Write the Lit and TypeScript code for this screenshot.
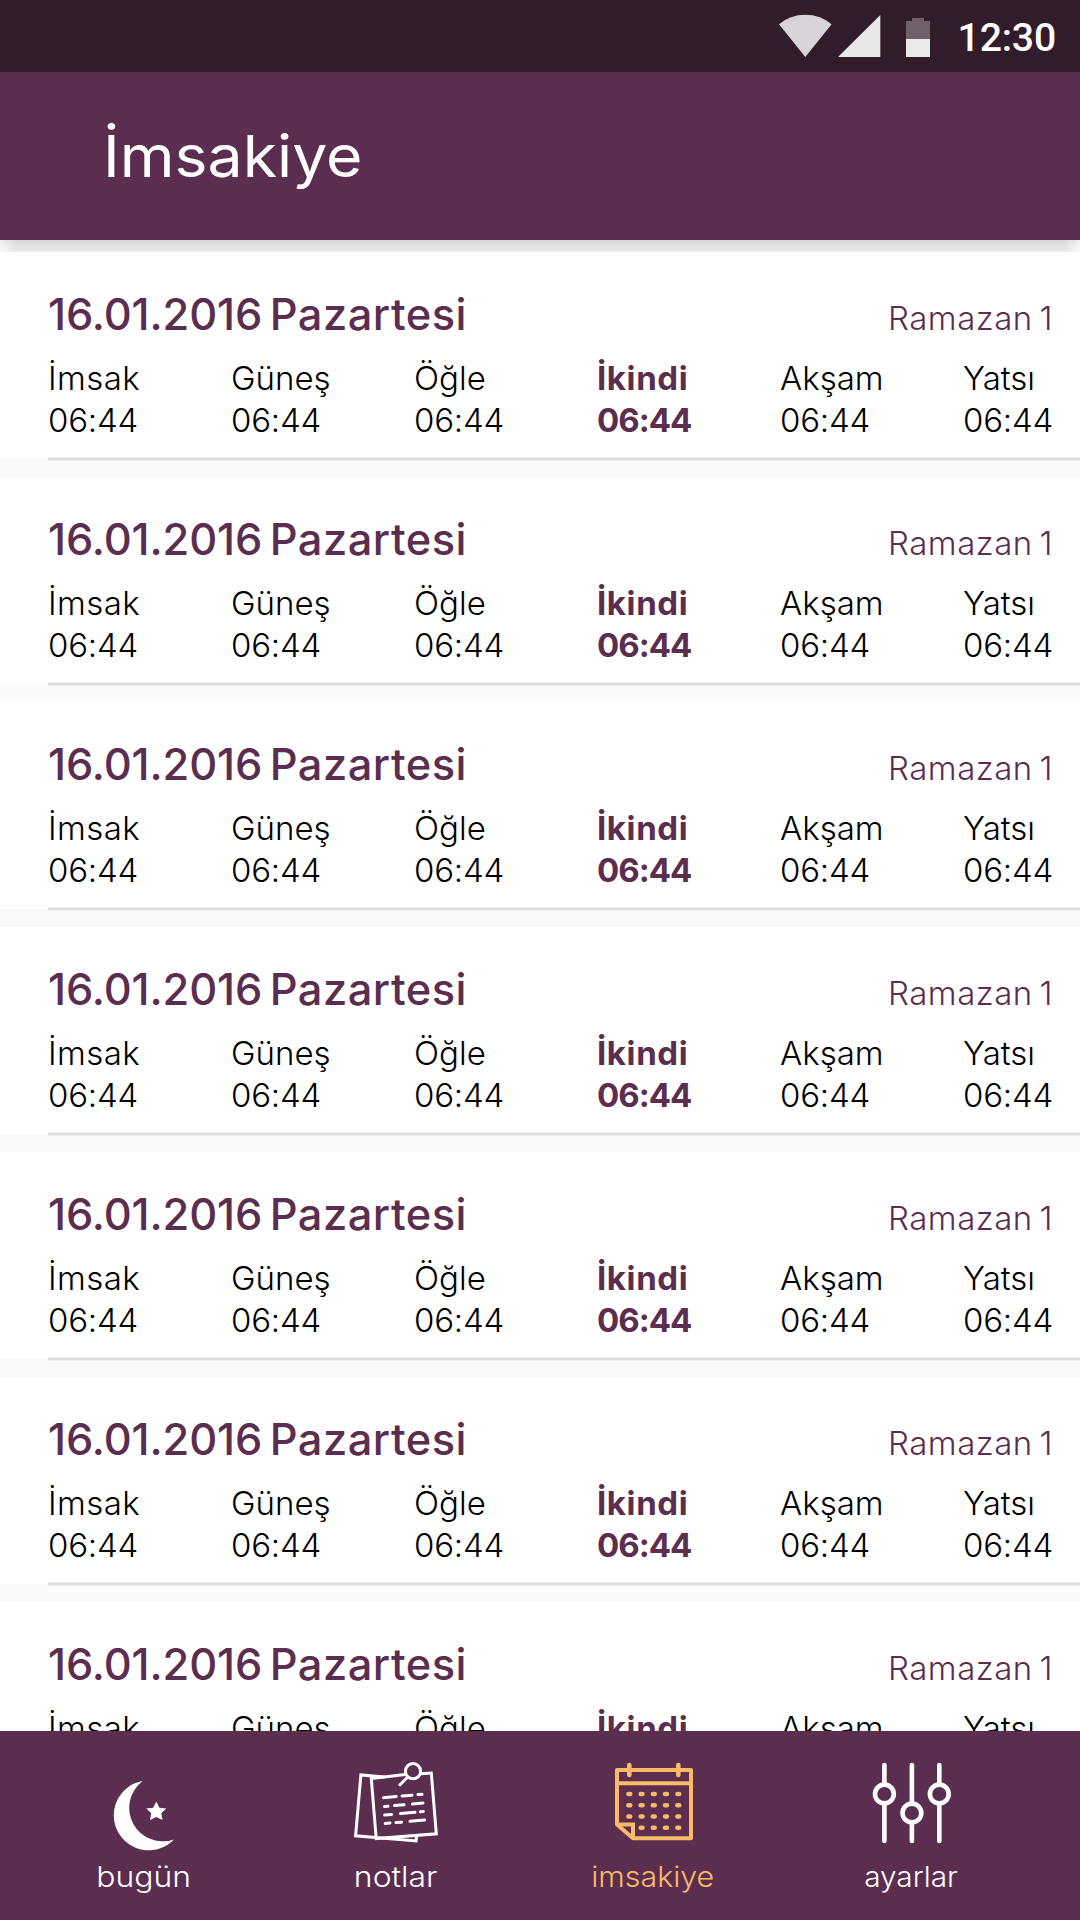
import { LitElement, html, css, svg } from "lit";
import { customElement, property } from "lit/decorators.js";
import { classMap } from "lit/directives/class-map.js";

interface Prayer { name: string; time: string; active?: boolean }
interface Day { date: string; weekday: string; hijri: string; prayers: Prayer[] }

const PRAYERS: Prayer[] = [
  { name: "İmsak", time: "06:44" },
  { name: "Güneş", time: "06:44" },
  { name: "Öğle", time: "06:44" },
  { name: "İkindi", time: "06:44", active: true },
  { name: "Akşam", time: "06:44" },
  { name: "Yatsı", time: "06:44" },
];

const DAYS: Day[] = Array.from({ length: 7 }, () => ({
  date: "16.01.2016",
  weekday: "Pazartesi",
  hijri: "Ramazan 1",
  prayers: PRAYERS,
}));

@customElement("status-bar")
export class StatusBar extends LitElement {
  static styles = css`
    :host { display: flex; justify-content: flex-end; flex: none; height: 72px; background: #311c2b; padding-right: 24px; }
    .icons { width: 152px; height: 72px; margin-right: 28px; }
    .time { font: 500 39.2px/76px Roboto, sans-serif; color: #fff; letter-spacing: -0.2px; }
  `;
  render() {
    return html`
      <svg class="icons" viewBox="778 0 152 72">
        <path d="M805.300 57 L779 24.300 Q790 14.800 805.300 14.800 Q820.600 14.800 831.600 24.300 Z" fill="#dad3d9" />
        <path d="M838 57 L880.300 15 V57 Z" fill="#eae7eb" />
        <path d="M906 39 V21 H912 V18 H924 V21 H930 V39 Z" fill="#6f606b" />
        <path d="M906 39 H930 V57 H906 Z" fill="#ece9ea" />
      </svg>
      <span class="time">12:30</span>
    `;
  }
}

@customElement("day-row")
export class DayRow extends LitElement {
  @property({ attribute: false }) day!: Day;
  static styles = css`
    :host { display: block; box-sizing: border-box; height: 225px; flex: none; background: #fafafa; font-family: Inter, sans-serif; color: #000; }
    .card { box-sizing: border-box; height: 207px; padding: 36px 0 0 48px; background: #fff; }
    .head { display: flex; justify-content: space-between; align-items: baseline; height: 52px; padding-right: 27px; color: #5b2e4f; }
    .date { font-size: 43.400px; line-height: 52px; font-weight: 500; letter-spacing: -0.1px; word-spacing: -4px; white-space: nowrap; }
    .weekday { letter-spacing: 0.5px; }
    .hijri { font-size: 33px; line-height: 42px; font-weight: 300; letter-spacing: 0.5px; word-spacing: -3px; }
    .times { display: grid; grid-template-columns: repeat(6, 183px); margin-top: 17px; font-size: 33px; line-height: 42px; font-weight: 300; }
    .cell { display: flex; flex-direction: column; white-space: nowrap; }
    .cell:first-child .name { letter-spacing: 0.4px; }
    .clock { letter-spacing: -0.2px; }
    .active { color: #5b2e4f; font-weight: 700; }
    .active .name { letter-spacing: 0.6px; }
    .active .clock { letter-spacing: -1px; }
    .rule { height: 4px; margin: -2px 0 0 48px; background: linear-gradient(#ededed 0 1px, #dcdcdc 1px 3px, #ededed 3px); }
  `;
  render() {
    return html`
      <div class="card">
        <div class="head"><span class="date">${this.day.date} <span class="weekday">${this.day.weekday}</span></span><span class="hijri">${this.day.hijri}</span></div>
        <div class="times">
          ${this.day.prayers.map((p) => html`
            <div class=${classMap({ cell: true, active: !!p.active })}>
              <span class="name">${p.name}</span><span class="clock">${p.time}</span>
            </div>`)}
        </div>
      </div>
      <div class="rule"></div>
    `;
  }
}

const moon = svg`
  <path d="M142.700 1781 A34.900 34.900 0 1 0 174 1839.400 A33.500 33.500 0 0 1 142.700 1781 Z" fill="#fff" />
  <path d="M156.300 1801.500 L159.400 1807.700 L166.300 1808.400 L161.300 1813.200 L162.600 1820 L156.300 1817 L150 1820 L151.300 1813.200 L146.300 1808.400 L153.200 1807.700 Z" fill="#fff" />`;

const notes = svg`
  <g fill="none" stroke="#fff" stroke-width="3" stroke-linejoin="miter">
    <path d="M405 1774.600 L371.300 1778.600 L376.200 1838.600 L436.300 1833.800 L431.300 1773 L421 1773.800" />
    <path d="M385 1777 L360.900 1774.900 L355.600 1835.800 L416 1841 L416.600 1836" />
    <circle cx="413" cy="1771.200" r="7.600" />
    <path d="M407.500 1777.300 L400 1784.700" stroke-linecap="round" />
  </g>
  <g fill="none" stroke="#fff" stroke-width="3" stroke-linecap="round">
    <path d="M383.500 1797.700 L396.200 1796.500 M402 1796 L412 1795.200 M418 1794.600 L422 1794.300" />
    <path d="M384.500 1806.500 L388 1806.200 M394.500 1805.600 L404 1804.800 M412.500 1804 L423 1803" />
    <path d="M384.700 1815 L391.500 1814.400 M400.500 1813.600 L415 1812.300 M420.300 1811.800 L423.300 1811.500" />
    <path d="M385.200 1823.500 L390 1823 M396 1822.600 L401.500 1822.200 M410 1821.300 L424.500 1820" />
  </g>`;

const calendar = svg`
  <g fill="none" stroke="#f9bb68" stroke-width="4">
    <path d="M617 1770 H691 V1838.300 H633 L617 1824.500 Z M617 1783.300 H691" stroke-linejoin="round" />
    <path d="M617 1824.500 H633 V1838.300" />
    <path d="M629.300 1765 V1775 M678.300 1765 V1775" stroke-width="4.600" stroke-linecap="round" />
  </g>
  <g fill="#f9bb68">
    ${[1794, 1805.300, 1816.500, 1827.700].map((y, r) =>
      [629.300, 641.600, 653.800, 666, 678.300].map((x, c) =>
        r === 3 && c === 0 ? svg`` : svg`<rect x=${x - 3.200} y=${y - 2.300} width="6.400" height="4.600" rx="2.300" />`))}
  </g>`;

const sliders = svg`
  <g fill="none" stroke="#fff" stroke-width="4.600" stroke-linecap="round">
    <path d="M884.400 1765 V1783 M884.400 1805 V1841 M911.900 1765 V1802 M911.900 1824 V1841 M939.300 1765 V1783 M939.300 1805 V1841" />
    <circle cx="884.400" cy="1794" r="9.400" />
    <circle cx="911.900" cy="1813" r="9.400" />
    <circle cx="939.300" cy="1794" r="9.400" />
  </g>`;

const TABS = [
  { label: "bugün", key: "bugun", box: "99 1756 90 96", icon: moon },
  { label: "notlar", key: "notlar", box: "351 1756 90 96", icon: notes },
  { label: "imsakiye", key: "imsakiye", box: "608 1756 90 96", icon: calendar },
  { label: "ayarlar", key: "ayarlar", box: "866 1756 90 96", icon: sliders },
];

@customElement("tab-bar")
export class TabBar extends LitElement {
  static styles = css`
    :host { display: grid; grid-template-columns: 288px 216px 298px 218px; flex: none; box-sizing: border-box; height: 189px; padding-top: 25px; background: #5b2e4f; color: #fff; }
    .tab { display: flex; flex-direction: column; align-items: center; }
    .icon { display: block; width: 90px; height: 96px; }
    .label { margin-top: 5px; font: 300 28px/40px Inter, sans-serif; transform: scaleX(1.14); }
    .imsakiye { color: #f9bb68; }
    .imsakiye .label { transform: scaleX(1.085); }
    .ayarlar .label { transform: scaleX(1.065); }
  `;
  render() {
    return TABS.map((t) => html`
      <div class="tab ${t.key}">
        <svg class="icon" viewBox=${t.box}>${t.icon}</svg>
        <span class="label">${t.label}</span>
      </div>`);
  }
}

@customElement("app-root")
export class AppRoot extends LitElement {
  static styles = css`
    :host { display: flex; flex-direction: column; width: 1080px; height: 1920px; overflow: hidden; background: #fff; }
    .appbar { flex: none; height: 168px; box-sizing: border-box; padding: 48px 0 0 102.500px; background: #5b2e4f; color: #fff; }
    .title { display: inline-block; margin: 0; font: 400 58px/72px Inter, sans-serif; transform-origin: left; transform: scaleX(1.078); }
    .shade { flex: none; height: 12px; background: linear-gradient(90deg, rgba(255,255,255,.7), rgba(255,255,255,0) 16px, rgba(255,255,255,0) 1064px, rgba(255,255,255,.7)), linear-gradient(#d6d6d6, #ebebeb); }
    .list { flex: 1; min-height: 0; display: flex; flex-direction: column; overflow: hidden; }
  `;
  render() {
    return html`
      <status-bar></status-bar>
      <header class="appbar"><h1 class="title">İmsakiye</h1></header>
      <div class="shade"></div>
      <main class="list">${DAYS.map((d) => html`<day-row .day=${d}></day-row>`)}</main>
      <tab-bar></tab-bar>
    `;
  }
}
